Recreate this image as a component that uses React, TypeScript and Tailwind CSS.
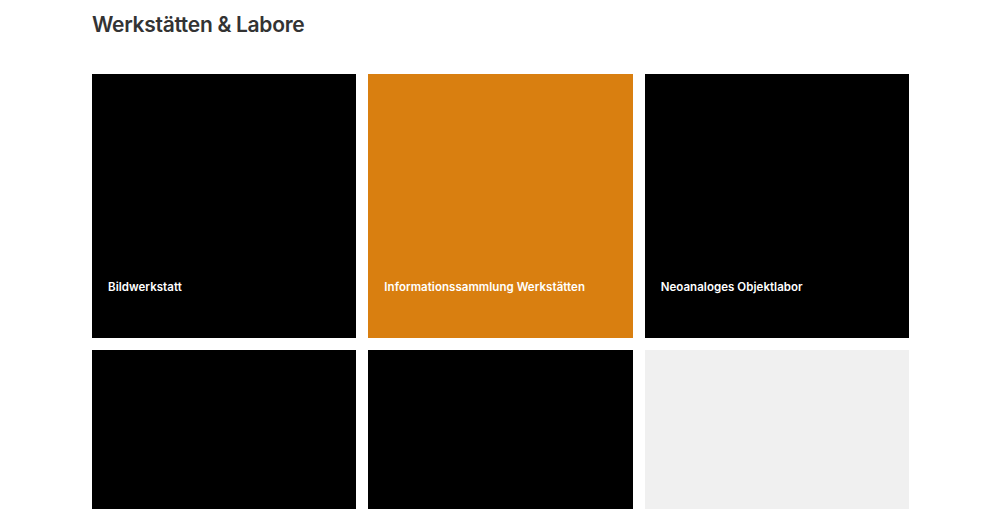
import React from "react";

const tiles = [
  { label: "Bildwerkstatt", bg: "bg-black" },
  { label: "Informationssammlung Werkstätten", bg: "bg-[#d97f10]" },
  { label: "Neoanaloges Objektlabor", bg: "bg-black" },
  { label: "", bg: "bg-black" },
  { label: "", bg: "bg-black" },
  { label: "", bg: "bg-[#f0f0f0]" },
];

export default function App() {
  return (
    <div className="min-h-screen bg-white" style={{ fontFamily: "Inter, 'Noto Sans', sans-serif" }}>
      <div className="pl-[92px] pr-[91px] pt-[11px]">
        <h1 className="text-[21px] leading-[28px] font-semibold text-[#333333] tracking-[-0.3px]">
          Werkstätten &amp; Labore
        </h1>
        <div className="mt-[35px] grid grid-cols-3 gap-[12px]">
          {tiles.map((t, i) => (
            <div key={i} className={`${t.bg} aspect-square flex flex-col justify-end px-4 pb-[43px]`}>
              {t.label && (
                <span className="text-white text-[11.5px] leading-[16px] font-semibold tracking-[0.05px]">
                  {t.label}
                </span>
              )}
            </div>
          ))}
        </div>
      </div>
    </div>
  );
}
